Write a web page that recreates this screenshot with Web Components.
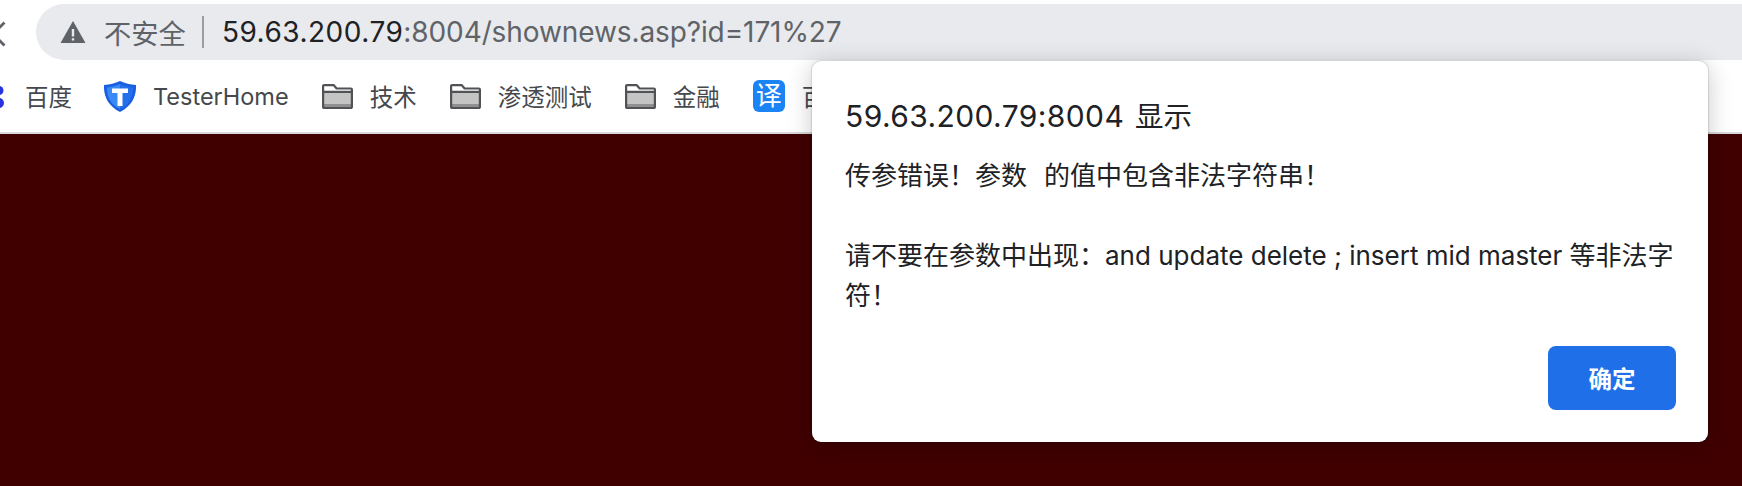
<!DOCTYPE html>
<html lang="zh">
<head>
<meta charset="utf-8">
<style>
    html, body { margin: 0; height: 100%; overflow: hidden; background: #400000; }
    body { font-family: "Inter", "Noto Sans CJK SC", sans-serif; display: flex; flex-direction: column; position: relative; }
    alert-dialog p { margin: 0 0 40px; }
    alert-dialog p:last-of-type { margin-bottom: 0; }
    alert-dialog .gap { display: inline-block; width: 17px; }
</style>
</head>
<body>
<address-bar>
    <span slot="host">59.63.200.79</span><span slot="rest">:8004/shownews.asp?id=171%27</span>
</address-bar>
<bookmark-bar>
    <book-mark label="百度" style="margin-left:25px"></book-mark>
    <book-mark label="TesterHome" icon="shield" style="margin-left:32px"></book-mark>
    <book-mark label="技术" icon="folder" style="margin-left:33px"></book-mark>
    <book-mark label="渗透测试" icon="folder" style="margin-left:33px"></book-mark>
    <book-mark label="金融" icon="folder" style="margin-left:33px"></book-mark>
    <book-mark label="百" icon="translate" style="margin-left:33px"></book-mark>
</bookmark-bar>
<page-area></page-area>
<alert-dialog>
    <span slot="heading">59.63.200.79:8004</span>
    <span slot="suffix">显示</span>
    <p>传参错误！参数<span class="gap"></span>的值中包含非法字符串！</p>
    <p>请不要在参数中出现：and update delete ; insert mid master 等非法字符！</p>
    <span slot="action">确定</span>
</alert-dialog>

<script>
class AddressBar extends HTMLElement {
    constructor() {
        super();
        this.attachShadow({mode: 'open'});
        this.shadowRoot.innerHTML = `
            <style>
                :host { display: flex; flex: none; height: 60px; box-sizing: border-box; padding: 4px 0 0 0; background: #fff; align-items: stretch; }
                .back { flex: none; width: 36px; }
                .back svg { display: block; margin-top: 16px; }
                .pill {
                    flex: 1; display: flex; align-items: center; background: #e8eaed;
                    border-radius: 28px 0 0 28px; padding-left: 24px; color: #5f6368;
                }
                .warn { flex: none; margin-right: 18px; }
                .label { font-size: 27.300px; color: #5f6368; font-family: "Noto Sans CJK SC", sans-serif; }
                .sep { flex: none; width: 2px; height: 32px; background: #9a9ca0; margin: 0 18px 0 16px; }
                .url { font-size: 28px; white-space: nowrap; }
                ::slotted([slot=host]) { color: #202124; letter-spacing: .5px; }
                ::slotted([slot=rest]) { letter-spacing: -.1px; }
            </style>
            <div class="back"><svg width="6" height="28" viewBox="0 0 6 28"><path d="M-7 14 4.500 2.500M-7 14 4.500 25.500" fill="none" stroke="#5f6368" stroke-width="2.800"/></svg></div>
            <div class="pill">
                <svg class="warn" width="26" height="24" viewBox="0 0 26 24"><path fill-rule="evenodd" fill="#5f6368" d="M13 1 25.500 23H.5ZM11.800 9v7.500h2.400V9Zm0 9.200v2.400h2.400v-2.400Z"/></svg>
                <span class="label">不安全</span><span class="sep"></span>
                <span class="url"><slot name="host"></slot><slot name="rest"></slot></span>
            </div>
        `;
    }
}
customElements.define('address-bar', AddressBar);

class BookmarkBar extends HTMLElement {
    constructor() {
        super();
        this.attachShadow({mode: 'open'});
        this.shadowRoot.innerHTML = `
            <style>
                :host { display: flex; flex: none; height: 74px; box-sizing: border-box; background: #fff; border-bottom: 2px solid #d8d9db; align-items: center; overflow: hidden; position: relative; }
                svg { position: absolute; left: 0; top: 26px; }
            </style>
            <svg width="4" height="22" viewBox="0 0 4 22"><circle cx="-1" cy="4.500" r="4.500" fill="#2932e1"/><circle cx="-1" cy="17" r="5" fill="#2932e1"/></svg>
            <slot></slot>
        `;
    }
}
customElements.define('bookmark-bar', BookmarkBar);

const BOOK_ICONS = {
    shield: `<svg width="32" height="31" viewBox="0 0 32 31"><path fill="#1b5ee0" d="M16 0C21 2.500 26 3.500 32 4C32.500 14 29 24.500 16 31C3 24.500-.5 14 0 4C6 3.500 11 2.500 16 0Z"/><path fill="#3a8af6" d="M16 3C12 5 7.500 6 3 6.500C3 14 5.500 23.500 16 28Z"/><path fill="#2470ea" d="M16 3C20 5 24.500 6 29 6.500C29 14 26.500 23.500 16 28Z"/><path fill="#fff" d="M8 7.500H24V12H18.500V25H13.500V12H8Z"/></svg>`,
    folder: `<svg width="31" height="25" viewBox="0 0 31 25"><path fill="#c4c4c4" d="M1 8h29v16H1z"/><path fill="#8f8f8f" d="M1 20h29v4H1z"/><path fill="#fff" d="M1.500 8V2h10l3 3h15v3z"/><path fill="none" stroke="#505255" stroke-width="2.200" stroke-linejoin="round" d="M1.100 23V2.100a1 1 0 0 1 1-1h9.500l3 3.400h14.300a1 1 0 0 1 1 1V23a1 1 0 0 1-1 1H2.100a1 1 0 0 1-1-1ZM1.100 7.800h28.800"/></svg>`,
    translate: `<span class="tr">译</span>`
};

class BookMark extends HTMLElement {
    static get observedAttributes() {
        return ['label', 'icon'];
    }

    constructor() {
        super();
        this.attachShadow({mode: 'open'});
    }

    connectedCallback() {
        this.render();
    }

    attributeChangedCallback() {
        if (this.shadowRoot.childElementCount) {
            this.render();
        }
    }

    render() {
        const icon = BOOK_ICONS[this.getAttribute('icon')] || '';
        this.shadowRoot.innerHTML = `
            <style>
                :host { display: inline-flex; flex: none; align-items: center; gap: 17px; font-size: 23.500px; color: #45484c; white-space: nowrap; }
                svg { display: block; flex: none; }
                .tr {
                    display: flex; align-items: center; justify-content: center; width: 32px; height: 32px;
                    background: #1a84f5; border-radius: 6px; color: #fff; font-size: 26px; line-height: 1;
                }
            </style>
            ${icon}<span>${this.getAttribute('label')}</span>
        `;
    }
}
customElements.define('book-mark', BookMark);

class PageArea extends HTMLElement {
    constructor() {
        super();
        this.attachShadow({mode: 'open'});
        this.shadowRoot.innerHTML = `<style>:host { display: block; flex: 1; background: #400000; }</style>`;
    }
}
customElements.define('page-area', PageArea);

class AlertDialog extends HTMLElement {
    constructor() {
        super();
        this.attachShadow({mode: 'open'});
        this.shadowRoot.innerHTML = `
            <style>
                :host {
                    position: absolute; left: 812px; top: 61px; width: 896px; height: 381px; box-sizing: border-box;
                    padding: 32px 32px 32px 33px; background: #fff; border-radius: 9px;
                    box-shadow: 0 0 2px rgba(0,0,0,.35), 0 4px 24px rgba(0,0,0,.22);
                    display: flex; flex-direction: column; color: #202124;
                }
                h2 { margin: 0 0 16px; font-size: 30px; font-weight: 400; line-height: 46px; letter-spacing: .4px; }
                .cjk { font-size: 28.500px; letter-spacing: 0; margin-left: 2px; }
                .msg { flex: 1; font-size: 26px; line-height: 40px; }
                .actions { display: flex; justify-content: flex-end; }
                button {
                    font: inherit; font-size: 23.500px; font-weight: 700; width: 128px; height: 64px; border: 0;
                    border-radius: 8px; background: #1f6fe8; color: #fff; padding: 0;
                }
            </style>
            <h2><slot name="heading"></slot> <span class="cjk"><slot name="suffix"></slot></span></h2>
            <div class="msg"><slot></slot></div>
            <div class="actions"><button><slot name="action"></slot></button></div>
        `;
    }
}
customElements.define('alert-dialog', AlertDialog);
</script>
</body>
</html>
